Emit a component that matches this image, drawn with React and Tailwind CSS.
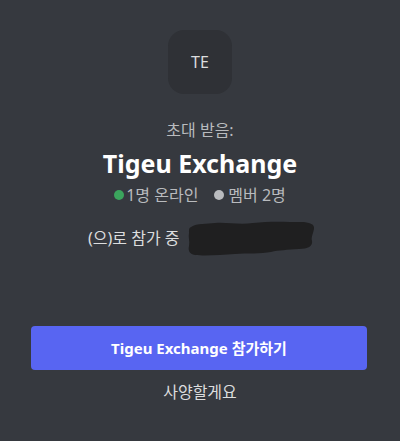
import React from "react";

function Scribble() {
  return (
    <svg width="132" height="38" viewBox="0 0 130 38" className="ml-[6px] shrink-0">
      <path
        d="M4 8 C10 4 20 5 28 4 C40 3 52 6 66 4 C82 2 100 3 114 3 C122 3 128 5 127 10 C126 15 124 18 125 22 C126 27 121 30 112 30 C100 31 92 31 84 33 C74 35 60 34 48 35 C34 36 18 37 8 36 C2 35 1 31 2 27 C3 22 1 18 2 14 C2 10 2 9 4 8 Z"
        fill="#1f1f20"
      />
    </svg>
  );
}

function App() {
  return (
    <div
      className="w-[400px] h-[441px] bg-[#36393f] flex flex-col items-center px-[31px] pt-[30px]"
      style={{ fontFamily: '"Noto Sans", "Noto Sans CJK KR", sans-serif' }}
    >
      <div className="w-[64px] h-[64px] rounded-[16px] bg-[#2f3136] flex items-center justify-center text-[#dcddde] text-[16px] font-normal">
        TE
      </div>
      <div className="mt-[26px] text-[16px] leading-[20px] text-[#b9bbbe]">초대 받음:</div>
      <div className="mt-[8px] text-[25px] leading-[30px] font-bold text-white">Tigeu Exchange</div>
      <div className="mt-[7px] flex items-center text-[16px] leading-[20px] text-[#b9bbbe]">
        <span className="w-[10px] h-[10px] rounded-full bg-[#3ba55d] mr-[2px]" />
        <span>1명 온라인</span>
        <span className="w-[10px] h-[10px] rounded-full bg-[#b9bbbe] ml-[16px] mr-[4px]" />
        <span>멤버 2명</span>
      </div>
      <div className="mt-[14px] w-full flex items-center pl-[57px] text-[16px] leading-[20px] text-[#dcddde]">
        <span>(으)로 참가 중</span>
        <Scribble />
      </div>
      <button className="mt-[69px] self-start w-[336px] h-[44px] shrink-0 rounded-[4px] bg-[#5865f2] text-white text-[15px] font-bold">
        Tigeu Exchange 참가하기
      </button>
      <div className="mt-[12px] text-[16px] leading-[20px] text-[#dcddde]">사양할게요</div>
    </div>
  );
}

export default App;
